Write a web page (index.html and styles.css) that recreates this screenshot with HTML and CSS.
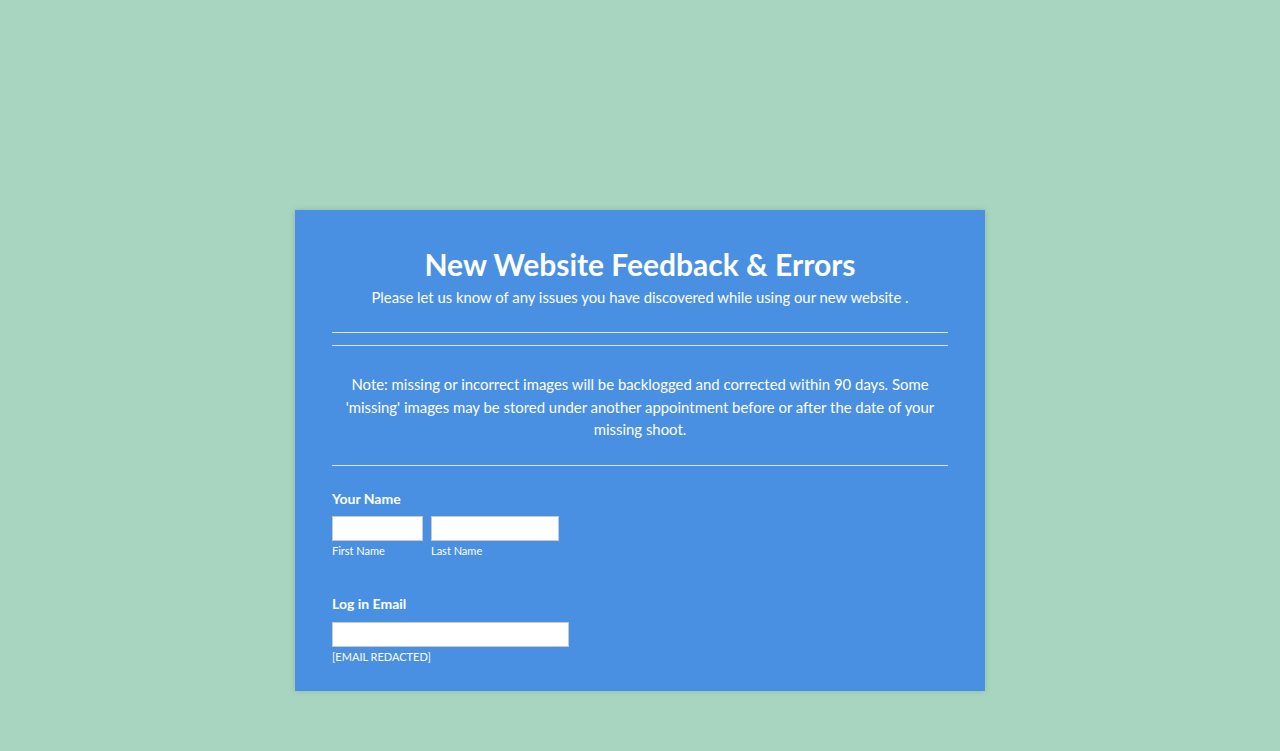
FILE: index.html
```html
<!DOCTYPE html>
<html>
<head>
<meta charset="utf-8">
<link rel="stylesheet" href="styles.css">
</head>
<body>
<div class="page">
  <form class="card">
    <div class="header">
      <h1 class="title">New Website Feedback &amp; Errors</h1>
      <p class="subtitle">Please let us know of any issues you have discovered while using our new website .</p>
    </div>
    <hr class="rule rule-a">
    <hr class="rule rule-b">
    <p class="note">Note: missing or incorrect images will be backlogged and corrected within 90 days. Some 'missing' images may be stored under another appointment before or after the date of your missing shoot.</p>
    <hr class="rule rule-c">
    <div class="field">
      <label class="label">Your Name</label>
      <div class="row">
        <div class="sub">
          <input class="input input-first" type="text">
          <span class="sublabel">First Name</span>
        </div>
        <div class="sub">
          <input class="input input-last" type="text">
          <span class="sublabel">Last Name</span>
        </div>
      </div>
    </div>
    <div class="field field-email">
      <label class="label">Log in Email</label>
      <div class="sub">
        <input class="input input-email" type="text">
        <span class="sublabel">[EMAIL REDACTED]</span>
      </div>
    </div>
  </form>
</div>
</body>
</html>
```
FILE: styles.css
```css
html, body {
  margin: 0;
  padding: 0;
  background: #a8d5c0;
  font-family: Lato, "Open Sans", sans-serif;
  color: #fff;
}
.page {
  display: flex;
  justify-content: center;
  padding-top: 210px;
  min-height: 751px;
  box-sizing: border-box;
}
.card {
  width: 690px;
  box-sizing: border-box;
  background: #4a90e2;
  padding: 34px 37px 27px;
  box-shadow: 0 0 6px rgba(0, 0, 0, 0.15);
  display: flex;
  flex-direction: column;
  align-self: flex-start;
}
.header {
  text-align: center;
}
.title {
  margin: 0;
  font-size: 30px;
  font-weight: 700;
  line-height: 40px;
}
.subtitle {
  margin: 2px 0 0;
  font-size: 14.85px;
  line-height: 22px;
}
.rule {
  border: 0;
  height: 1px;
  background: #e0e6ef;
  margin: 0;
}
.rule-a { margin-top: 24px; }
.rule-b { margin-top: 12px; }
.note {
  margin: 27px 0 0;
  text-align: center;
  font-size: 14.9px;
  line-height: 22.5px;
}
.rule-c { margin-top: 24px; }
.field {
  display: flex;
  flex-direction: column;
  margin-top: 23px;
}
.field-email { margin-top: 36px; }
.label {
  font-size: 14px;
  font-weight: 700;
  line-height: 20px;
  margin-bottom: 7px;
}
.field-email .label { margin-bottom: 8px; }
.row {
  display: flex;
  gap: 8px;
}
.sub {
  display: flex;
  flex-direction: column;
}
.input {
  height: 25px;
  box-sizing: border-box;
  border: 1px solid #c8c8c8;
  background: #fff;
  margin: 0;
  padding: 2px 4px;
}
.input-first { width: 91px; }
.input-last { width: 128px; }
.input-email { width: 237px; }
.sublabel {
  font-size: 11px;
  line-height: 14px;
  margin-top: 3px;
}
```
